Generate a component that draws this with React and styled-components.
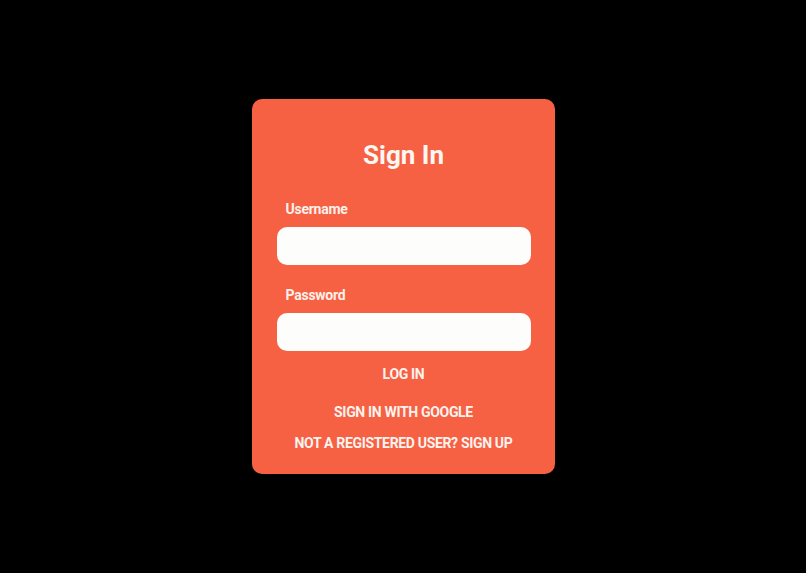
import React, { useState } from "react";
import styled, { createGlobalStyle } from "styled-components";

const GlobalStyle = createGlobalStyle`
  html, body {
    margin: 0;
    padding: 0;
    background: #000;
  }
  body {
    font-family: Roboto, "Liberation Sans", sans-serif;
  }
`;

export default function App() {
  const [username, setUsername] = useState("");
  const [password, setPassword] = useState("");

  return (
    <>
      <GlobalStyle />
      <Container>
        <Card>
          <Title>Sign In</Title>
          <Form onSubmit={(e) => e.preventDefault()}>
            <Label htmlFor="username">Username</Label>
            <Input
              id="username"
              value={username}
              onChange={(e) => setUsername(e.target.value)}
            />
            <Label htmlFor="password" $top={22}>
              Password
            </Label>
            <Input
              id="password"
              type="password"
              value={password}
              onChange={(e) => setPassword(e.target.value)}
            />
            <TextButton type="submit" $top={15}>
              LOG IN
            </TextButton>
            <TextButton type="button" $top={22}>
              SIGN IN WITH GOOGLE
            </TextButton>
            <TextButton type="button" $top={15}>
              NOT A REGISTERED USER? SIGN UP
            </TextButton>
          </Form>
        </Card>
      </Container>
    </>
  );
}

const Container = styled.div`
  width: 100vw;
  height: 100vh;
  display: flex;
  align-items: center;
  justify-content: center;
  background: #000;
`;

const Card = styled.div`
  width: 303px;
  height: 375px;
  box-sizing: border-box;
  padding: 39px 24px 0 25px;
  background-color: #f66043;
  border-radius: 10px;
  display: flex;
  flex-direction: column;
`;

const Title = styled.h1`
  margin: 0;
  font-size: 26px;
  line-height: 34px;
  font-weight: 700;
  color: #fdf7f2;
  text-align: center;
`;

const Form = styled.form`
  display: flex;
  flex-direction: column;
  margin-top: 29px;
`;

const Label = styled.label`
  margin-top: ${(p) => p.$top || 0}px;
  padding-left: 9px;
  font-size: 14px;
  line-height: 16px;
  font-weight: 700;
  letter-spacing: -0.25px;
  color: #fdf1ea;
  margin-bottom: 10px;
`;

const Input = styled.input`
  height: 38px;
  box-sizing: border-box;
  border: none;
  border-radius: 10px;
  background: #fdfdfb;
  padding: 0 12px;
  font-family: inherit;
  font-size: 14px;
  outline: none;
`;

const TextButton = styled.button`
  margin-top: ${(p) => p.$top || 0}px;
  align-self: center;
  border: none;
  background: none;
  padding: 0;
  font-family: inherit;
  font-size: 14px;
  line-height: 16px;
  font-weight: 700;
  letter-spacing: -0.33px;
  color: #fdf3ee;
  cursor: pointer;
`;
